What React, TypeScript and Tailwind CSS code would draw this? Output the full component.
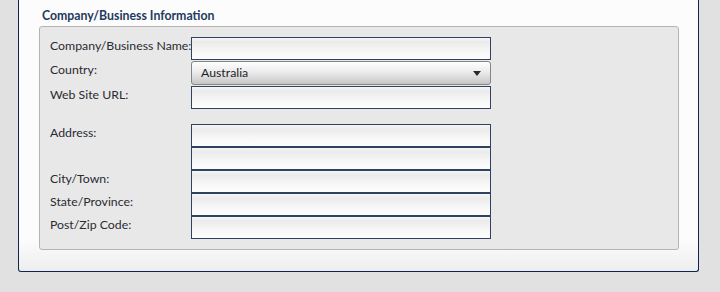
import React from "react";

const inputBg =
  "bg-[linear-gradient(to_bottom,#f6f6f6_0px,#ebebeb_4px,#f8f8f8_14px,#fdfdfd_100%)]";

function TextInput() {
  return <div className={`h-[23px] w-[300px] border border-[#2e4262] ${inputBg}`} />;
}

function Row({ label, children, h }: { label?: string; children: React.ReactNode; h: string }) {
  return (
    <div className={`flex ${h}`}>
      <div className="w-[141px] shrink-0 whitespace-nowrap text-[12.3px] leading-[16px] pt-[1px] text-[#2a2a33]">
        {label}
      </div>
      {children}
    </div>
  );
}

export default function App() {
  return (
    <div
      className="w-[720px] h-[292px] bg-[#e1e1e1] overflow-hidden"
      style={{ fontFamily: "Lato, 'Open Sans', sans-serif" }}
    >
      <div className="ml-[18px] w-[681px] h-[272px] border-x border-b border-[#0f2450] rounded-b-[3px] bg-[linear-gradient(to_bottom,#fcfcfc_0px,#fcfcfc_240px,#ededed_100%)]">
        <div className="pl-[23px] pt-[8px] h-[26px] text-[12.3px] leading-[16px] font-bold text-[#233a5e]">
          Company/Business Information
        </div>
        <div className="ml-[20px] w-[640px] h-[224px] rounded-[3px] border border-[#b4b4b4] bg-[#e8e8e8] pt-[10px] pl-[10px]">
          <div className="flex flex-col gap-[1px]">
            <Row label="Company/Business Name:" h="h-[23px]">
              <TextInput />
            </Row>
            <Row label="Country:" h="h-[24px]">
              <div className="h-[24px] w-[300px] rounded-[3px] border border-[#858585] bg-[linear-gradient(to_bottom,#fefefe,#ececec_45%,#c6c6c6)] flex items-center pl-[9px] pr-[9px]">
                <span className="flex-1 text-[12.3px] leading-[16px] text-[#1e1e28]">Australia</span>
                <span className="w-0 h-0 border-l-[4px] border-r-[4px] border-t-[5px] border-l-transparent border-r-transparent border-t-[#2a2a2a]" />
              </div>
            </Row>
            <Row label="Web Site URL:" h="h-[23px]">
              <TextInput />
            </Row>
          </div>
          <div className="mt-[15px] flex flex-col">
            <Row label="Address:" h="h-[23px]">
              <TextInput />
            </Row>
            <Row h="h-[23px]">
              <TextInput />
            </Row>
            <Row label="City/Town:" h="h-[23px]">
              <TextInput />
            </Row>
            <Row label="State/Province:" h="h-[23px]">
              <TextInput />
            </Row>
            <Row label="Post/Zip Code:" h="h-[23px]">
              <TextInput />
            </Row>
          </div>
        </div>
      </div>
    </div>
  );
}
